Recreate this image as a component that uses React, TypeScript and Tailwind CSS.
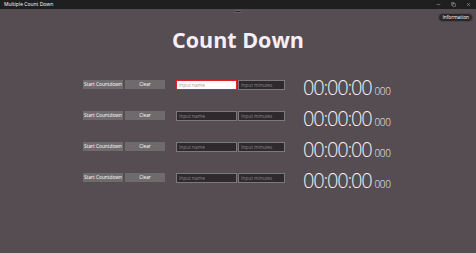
import { Minus, Copy, X } from "lucide-react";

const rows = [0, 1, 2, 3];

function CountRow({ focused }: { focused: boolean }) {
  return (
    <div className="flex items-center h-[31px]">
      <button className="w-[40px] h-[9px] bg-[#6f6a6c] text-white text-[4.8px] leading-none flex items-center justify-center">
        Start Countdown
      </button>
      <button className="ml-[2px] w-[40px] h-[9px] bg-[#6f6a6c] text-white text-[4.8px] leading-none flex items-center justify-center">
        Clear
      </button>
      <input
        className={
          focused
            ? "ml-[11px] w-[61px] h-[10px] bg-white border border-[#e0202a] px-[2px] text-[4.8px] placeholder-[#9a9a9a] outline-none"
            : "ml-[11px] w-[61px] h-[10px] bg-[#2e292c] border border-[#7d787a] px-[2px] text-[4.8px] placeholder-[#8c8789] outline-none"
        }
        placeholder="Input name"
      />
      <input
        className="ml-[1px] w-[47px] h-[10px] bg-[#2e292c] border border-[#7d787a] px-[2px] text-[4.8px] placeholder-[#8c8789] outline-none"
        placeholder="Input minutes"
      />
      <div className="ml-[18px] mt-[7px] flex items-baseline text-[#f4f0f4] font-light">
        <span className="text-[20px] leading-none tracking-[-1.2px]">00:00:00</span>
        <span className="ml-[3px] text-[10px] leading-none tracking-[-0.3px]">000</span>
      </div>
    </div>
  );
}

export default function App() {
  return (
    <div
      className="w-[476px] h-[253px] flex flex-col bg-[#564d52] overflow-hidden"
      style={{ fontFamily: '"Open Sans", "Noto Sans", sans-serif' }}
    >
      {/* Title bar */}
      <div className="h-[9px] bg-[#1f1f1f] flex items-center justify-between text-white">
        <span className="ml-[4px] text-[5px] leading-none">Multiple Count Down</span>
        <div className="flex items-center gap-[10px] mr-[5px]">
          <Minus size={5} strokeWidth={1.5} />
          <Copy size={5} strokeWidth={1.5} />
          <X size={5} strokeWidth={1.5} />
        </div>
      </div>

      <div className="relative flex-1">
        <div className="absolute left-[234px] top-[1px] w-[8px] h-[3px] bg-[#2a2628] border border-[#6a6567] rounded-[1px]" />
        <button className="absolute right-[3px] top-[4px] h-[9px] px-[3px] rounded-full bg-[#2b2729] border border-[#4a4547] text-white text-[4.8px] leading-none">
          Information
        </button>

        <h1 className="mt-[17px] text-center text-[#f6eef5] text-[21.5px] font-bold leading-[28px]">
          Count Down
        </h1>

        <div className="mt-[15px] ml-[83px] flex flex-col">
          {rows.map((r) => (
            <CountRow key={r} focused={r === 0} />
          ))}
        </div>
      </div>
    </div>
  );
}
